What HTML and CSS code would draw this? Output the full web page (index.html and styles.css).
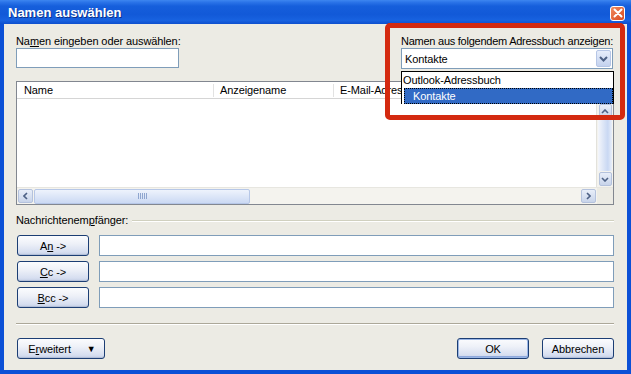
FILE: index.html
```html
<!DOCTYPE html>
<html lang="de">
<head>
    <meta charset="UTF-8">
    <title>Namen auswählen</title>
    <link rel="stylesheet" href="styles.css">
</head>
<body>
    <div class="window">
        <!--Title bar-->
        <div class="titlebar">
            <span class="title">Namen auswählen</span>
            <span class="close">
                <svg width="10" height="10" viewBox="0 0 10 10"><path d="M1.5 1.5 L8.5 8.5 M8.5 1.5 L1.5 8.5" stroke="#fff" stroke-width="2" stroke-linecap="round"/></svg>
            </span>
        </div>
        <div class="client">
            <!--Search box and address book chooser-->
            <div class="top-row">
                <div class="field-left">
                    <div class="label">Na<u>m</u>en eingeben oder auswählen:</div>
                    <div class="textbox name-box"></div>
                </div>
                <div class="field-right">
                    <div class="label">Namen aus folgendem Adressbuch anzeigen:</div>
                    <div class="combo">
                        <span class="combo-text">Kontakte</span>
                        <span class="combo-btn">
                            <svg width="9" height="6" viewBox="0 0 9 6"><path d="M1 1 L4.5 4.5 L8 1" fill="none" stroke="#4d6185" stroke-width="2"/></svg>
                        </span>
                    </div>
                    <div class="combo-list">
                        <div class="combo-item">Outlook-Adressbuch</div>
                        <div class="combo-item selected"><span>Kontakte</span></div>
                    </div>
                    <div class="highlight"></div>
                </div>
            </div>

            <!--Address list-->
            <div class="listview">
                <div class="lv-header">
                    <div class="col col-name">Name</div>
                    <div class="col col-display">Anzeigename</div>
                    <div class="col col-mail">E-Mail-Adresse</div>
                </div>
                <div class="lv-body">
                    <div class="lv-rows"></div>
                    <div class="vscroll">
                        <span class="sb-btn">
                            <svg width="8" height="5" viewBox="0 0 8 5"><path d="M1 4 L4 1 L7 4" fill="none" stroke="#4d6185" stroke-width="1.6"/></svg>
                        </span>
                        <div class="vtrack"></div>
                        <span class="sb-btn">
                            <svg width="8" height="5" viewBox="0 0 8 5"><path d="M1 1 L4 4 L7 1" fill="none" stroke="#4d6185" stroke-width="1.6"/></svg>
                        </span>
                    </div>
                </div>
                <div class="hscroll">
                    <span class="sb-btn">
                        <svg width="5" height="8" viewBox="0 0 5 8"><path d="M4 1 L1 4 L4 7" fill="none" stroke="#4d6185" stroke-width="1.6"/></svg>
                    </span>
                    <div class="hthumb"><span class="grip"></span></div>
                    <div class="htrack"></div>
                    <span class="sb-btn">
                        <svg width="5" height="8" viewBox="0 0 5 8"><path d="M1 1 L4 4 L1 7" fill="none" stroke="#4d6185" stroke-width="1.6"/></svg>
                    </span>
                    <div class="corner"></div>
                </div>
            </div>

            <!--Recipients-->
            <div class="group-title">
                <span>Nachrichtenem<u>p</u>fänger:</span>
                <span class="group-line"></span>
            </div>
            <div class="recipient">
                <button class="btn">A<u>n</u> -&gt;</button>
                <div class="textbox"></div>
            </div>
            <div class="recipient">
                <button class="btn"><u>C</u>c -&gt;</button>
                <div class="textbox"></div>
            </div>
            <div class="recipient">
                <button class="btn"><u>B</u>cc -&gt;</button>
                <div class="textbox"></div>
            </div>

            <div class="separator"></div>

            <!--Dialog buttons-->
            <div class="footer">
                <button class="btn btn-more"><span>E<u>r</u>weitert</span><span class="arrow">&#9660;</span></button>
                <button class="btn btn-default">OK</button>
                <button class="btn">Abbrechen</button>
            </div>
        </div>
    </div>
</body>
</html>
```

FILE: styles.css
```css
body {
    margin: 0;
    font-family: "Liberation Sans", Arial, sans-serif;
    font-size: 11px;
    letter-spacing: -0.1px;
    color: #000;
}
u {
    text-decoration: underline;
    text-underline-offset: 1px;
}
/*Window frame*/
.window {
    width: 631px;
    height: 374px;
    box-sizing: border-box;
    display: flex;
    flex-direction: column;
    background: #0c50d6;
}
.titlebar {
    height: 24px;
    display: flex;
    align-items: center;
    padding: 0 7px 0 8px;
    background: linear-gradient(to bottom, #3d86f0 0%, #2a73e8 10%, #165fdc 25%, #1259d8 60%, #1862e0 85%, #0d4fce 100%);
}
.title {
    color: #fff;
    font-weight: bold;
    font-size: 13px;
    letter-spacing: 0;
    text-shadow: 1px 1px 0 #0a2f8a;
    padding-top: 1px;
}
.close {
    margin-left: auto;
    width: 13px;
    height: 13px;
    margin-right: -1px;
    margin-top: 2px;
    border: 1px solid #fff;
    border-radius: 3px;
    background: linear-gradient(135deg, #f08a5e, #d9481f);
    display: flex;
    align-items: center;
    justify-content: center;
}
.client {
    flex: 1;
    margin: 0 4px 4px;
    padding: 10px 13px 0 12px;
    background: #ecebe4;
}
/*Top fields*/
.top-row {
    display: flex;
    justify-content: space-between;
}
.label {
    line-height: 14px;
    height: 14px;
    white-space: nowrap;
}
.textbox {
    height: 19px;
    background: #fff;
    border: 1px solid #7f9db9;
    box-sizing: border-box;
}
.name-box {
    width: 163px;
    height: 20px;
}
.field-right {
    position: relative;
    width: 213px;
}
.field-right .label {
    letter-spacing: -0.25px;
}
.combo {
    width: 212px;
    height: 21px;
    box-sizing: border-box;
    border: 1px solid #7f9db9;
    background: #fff;
    display: flex;
    align-items: center;
    padding: 1px 1px 1px 3px;
}
.combo-text {
    flex: 1;
}
.combo-btn {
    width: 15px;
    height: 17px;
    box-sizing: border-box;
    border: 1px solid #b6c6e6;
    border-radius: 2px;
    background: linear-gradient(to bottom, #e6edfb, #c4d2ee);
    display: flex;
    align-items: center;
    justify-content: center;
}
/*Open drop down list lies over the list view*/
.combo-list {
    position: absolute;
    left: 0;
    top: 37px;
    width: 213px;
    box-sizing: border-box;
    border: 1px solid #000;
    border-bottom: none;
    background: #fff;
}
.combo-item {
    height: 16px;
    line-height: 16px;
    padding-left: 1px;
}
.combo-item.selected {
    margin-left: 2px;
    padding-left: 9px;
    background: #316ac5;
    color: #fff;
    outline: 1px dotted #000;
    outline-offset: -1px;
}
.highlight {
    position: absolute;
    left: -16px;
    top: -11px;
    width: 240px;
    height: 97px;
    box-sizing: border-box;
    border: 5px solid #d42a10;
    border-radius: 5px;
}
/*List view*/
.listview {
    margin-top: 12px;
    border: 1px solid #828790;
    background: #fff;
    height: 124px;
    box-sizing: border-box;
    display: flex;
    flex-direction: column;
}
.lv-header {
    height: 17px;
    display: flex;
    border-bottom: 1px solid #d5d5d5;
    box-sizing: border-box;
}
.col {
    padding-left: 6px;
    border-right: 1px solid #e2e2e2;
    margin: 2px 0 1px;
    line-height: 13px;
}
.col-name {
    width: 189px;
    padding-left: 7px;
}
.col-display {
    width: 113px;
}
.col-mail {
    flex: 1;
    border-right: none;
}
.lv-body {
    flex: 1;
    display: flex;
}
.lv-rows {
    flex: 1;
}
.vscroll {
    width: 16px;
    display: flex;
    flex-direction: column;
    align-items: center;
    padding-top: 4px;
    background: #f4f3ee;
    border-left: 1px solid #e3e2dc;
}
.sb-btn {
    width: 13px;
    height: 14px;
    margin: 1px 0;
    box-sizing: border-box;
    border: 1px solid #b4c2dd;
    border-radius: 2px;
    background: linear-gradient(to bottom, #e8eef9, #c8d4ea);
    display: flex;
    align-items: center;
    justify-content: center;
}
.vtrack {
    flex: 1;
    width: 14px;
    background: linear-gradient(to right, #f4f6fb, #c9d8f3 70%, #e8eef9);
}
.hscroll {
    height: 16px;
    display: flex;
    align-items: center;
    background: #f4f3ee;
    border-top: 1px solid #e7e6e0;
}
.hscroll .sb-btn {
    width: 15px;
    margin: 0 1px 0 1px;
}
.hthumb {
    width: 216px;
    height: 15px;
    box-sizing: border-box;
    border: 1px solid #b6c7e7;
    border-radius: 2px;
    background: linear-gradient(to bottom, #eef3fc, #cbd9f3);
    display: flex;
    align-items: center;
    justify-content: center;
}
.grip {
    width: 9px;
    height: 6px;
    background: repeating-linear-gradient(to right, #8fa6cf 0 1px, transparent 1px 2px);
}
.htrack {
    flex: 1;
}
.corner {
    width: 16px;
    height: 16px;
    background: #ecebe4;
}
/*Recipients*/
.group-title {
    margin-top: 9px;
    display: flex;
    align-items: center;
    line-height: 13px;
}
.group-line {
    flex: 1;
    margin-left: 4px;
    border-top: 1px solid #d0d0bf;
    border-bottom: 1px solid #fff;
}
.recipient {
    display: flex;
    gap: 10px;
    margin-top: 5px;
}
.group-title + .recipient {
    margin-top: 8px;
}
.recipient .textbox {
    flex: 1;
    height: 21px;
}
.btn {
    font-family: "Liberation Sans", Arial, sans-serif;
    font-size: 11px;
    letter-spacing: -0.1px;
    color: #000;
    width: 72px;
    height: 21px;
    padding: 0;
    margin-left: 1px;
    border: 1px solid #1c3e74;
    border-radius: 3px;
    background: linear-gradient(to bottom, #fbfcfe 0%, #eef1f8 40%, #d6def0 85%, #c2cde4 100%);
    box-shadow: inset 0 -1px 0 #b3bfd8;
}
.separator {
    margin-top: 15px;
    border-top: 1px solid #aca899;
    border-bottom: 1px solid #fff;
}
/*Dialog buttons*/
.footer {
    display: flex;
    gap: 12px;
    margin-top: 13px;
}
.btn-more {
    width: 88px;
    display: flex;
    align-items: center;
    justify-content: center;
    gap: 16px;
    padding-left: 2px;
}
.arrow {
    font-size: 9px;
}
.btn-default {
    margin-left: auto;
    box-shadow: inset 0 0 0 1px #9ab6e6, inset 0 -2px 0 #8fa9dc;
}
```
